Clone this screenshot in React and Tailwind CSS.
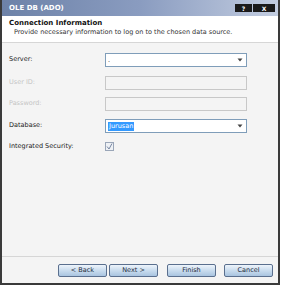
import React from 'react';

const font = { fontFamily: '"DejaVu Sans", "Liberation Sans", sans-serif' };

function Combo({ value, selected }) {
  return (
    <div className="flex h-[14px] w-[142px] items-center justify-between border border-[#7f9db9] bg-white pl-[2px] pr-[3px]">
      {selected ? (
        <span className="bg-[#3399ff] px-[1px] text-[6.5px] leading-[9px] text-white">{value}</span>
      ) : (
        <span className="text-[6.5px] leading-[9px] text-[#222]">{value}</span>
      )}
      <svg width="6" height="4" viewBox="0 0 6 4">
        <path d="M0.5 0.5h5L3 3.5z" fill="#444" />
      </svg>
    </div>
  );
}

function Field({ label, disabled, children, className }) {
  return (
    <div className={'flex items-center ' + (className || '')}>
      <span className={'w-[96px] text-[6.5px] ' + (disabled ? 'text-[#c4c4c4]' : 'text-[#222]')}>{label}</span>
      {children}
    </div>
  );
}

function Btn({ children }) {
  return (
    <div className="flex h-[13px] w-[49px] items-center justify-center rounded-[2px] border border-[#5a6f8e] bg-gradient-to-b from-[#eef4fb] via-[#c9dcee] to-[#a9c4e0] text-[6.5px] text-[#1e2a3a]">
      {children}
    </div>
  );
}

export default function App() {
  return (
    <div className="h-[288px] w-[284px] bg-white" style={font}>
      <div className="flex h-[285px] w-[280px] flex-col border-x-2 border-b-2 border-[#3a3a3a]">
        {/* title bar */}
        <div className="flex h-[16px] items-center justify-between bg-gradient-to-r from-[#6d82a8] via-[#8a9cc0] to-[#c3cde0] pl-[7px] pr-[3px]">
          <span className="text-[7px] font-semibold text-white">OLE DB (ADO)</span>
          <div className="flex gap-[1px]">
            <div className="flex h-[8px] w-[17px] items-center justify-center bg-[#1a1a1a] text-[6px] font-bold text-white">?</div>
            <div className="flex h-[8px] w-[22px] items-center justify-center bg-[#1a1a1a] text-[6px] font-bold text-white">X</div>
          </div>
        </div>

        {/* header */}
        <div className="flex h-[27px] flex-col border-b border-[#d6d6d6] bg-white pl-[7px] pt-[3px]">
          <span className="text-[7px] font-bold leading-[9px] text-[#111]">Connection Information</span>
          <span className="pl-[5px] text-[6.5px] leading-[9px] text-[#333]">
            Provide necessary information to log on to the chosen data source.
          </span>
        </div>

        {/* body */}
        <div className="flex flex-1 flex-col bg-[#f4f4f4] pl-[7px] pt-[10px]">
          <Field label="Server:">
            <Combo value="." />
          </Field>
          <Field label="User ID:" disabled className="mt-[9px]">
            <div className="h-[14px] w-[142px] border border-[#c8c8c8] bg-[#f4f4f4]" />
          </Field>
          <Field label="Password:" disabled className="mt-[7px]">
            <div className="h-[14px] w-[142px] border border-[#c8c8c8] bg-[#f4f4f4]" />
          </Field>
          <Field label="Database:" className="mt-[8px]">
            <Combo value="Jurusan" selected />
          </Field>
          <Field label="Integrated Security:" className="mt-[9px]">
            <div className="flex h-[9px] w-[9px] items-center justify-center border border-[#9aa6b8] bg-[#eef1f5]">
              <svg width="7" height="7" viewBox="0 0 7 7">
                <path d="M1 3.5L3 6L6 0.5" stroke="#6b7a99" strokeWidth="0.9" fill="none" />
              </svg>
            </div>
          </Field>
        </div>

        {/* footer */}
        <div className="flex h-[27px] items-center justify-end border-t border-[#d6d6d6] bg-[#f4f4f4] pr-[5px] pt-[1px]">
          <div className="flex gap-[2px]">
            <Btn>&lt; Back</Btn>
            <Btn>Next &gt;</Btn>
          </div>
          <div className="ml-[9px] flex gap-[8px]">
            <Btn>Finish</Btn>
            <Btn>Cancel</Btn>
          </div>
        </div>
      </div>
    </div>
  );
}
